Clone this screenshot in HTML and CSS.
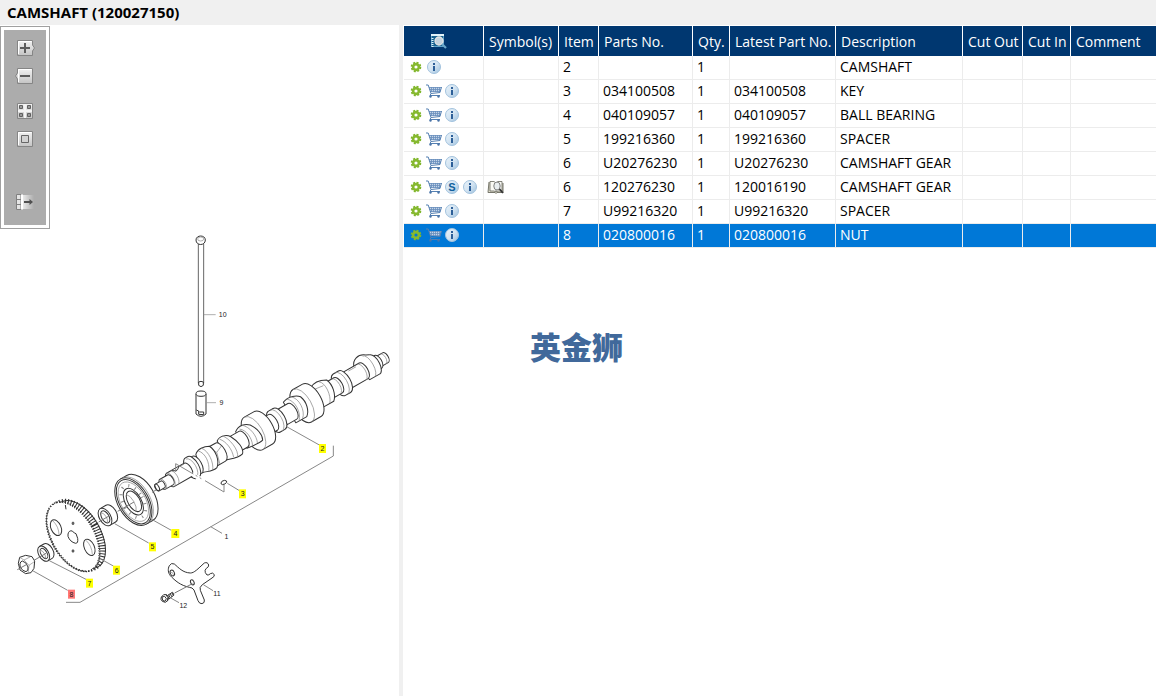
FILE: index.html
```html
<!DOCTYPE html>
<html lang="en">
<head>
  <meta charset="UTF-8" />
  <title>Parts Catalog</title>
  <link rel="stylesheet" href="styles.css">
</head>
<body>
  <!-- shared icons -->
  <svg class="sprite" aria-hidden="true">
    <defs>
      <linearGradient id="ball" x1="0" y1="0" x2="1" y2="1">
        <stop offset="0" stop-color="#eaf3fa" />
        <stop offset=".5" stop-color="#d3e4f2" />
        <stop offset="1" stop-color="#9dc0dd" />
      </linearGradient>
      <linearGradient id="key" x1="0" y1="0" x2="0" y2="1">
        <stop offset="0" stop-color="#f2f2f2" />
        <stop offset="1" stop-color="#c4c4c4" />
      </linearGradient>
      <linearGradient id="fade">
        <stop offset="0" stop-color="#eeeeee" />
        <stop offset="1" stop-color="#acacac" />
      </linearGradient>
      <symbol id="gear" viewBox="0 0 18 16">
        <circle cx="9" cy="8" r="4.4" fill="none" stroke="#7fb52c" stroke-width="1.8" stroke-dasharray="2 1.456" />
        <circle cx="9" cy="8" r="2.9" fill="none" stroke="#86b92f" stroke-width="2.6" />
      </symbol>
      <symbol id="cart" viewBox="0 0 18 16">
        <path d="M4 4H16L14.500 9H5.500Z" fill="#c3d4e8" />
        <path d="M4 4.500H16.500M4.500 6.500H15.500M5 8.500H15M6.500 4V9M8.500 4V9M10.500 4V9M12.500 4V9M14.500 4V9" stroke="#6a8fbd" stroke-width=".8" fill="none" />
        <path d="M1 2H3.200L6 10.500L5 12.500H15M16.500 4L15 9.500L6 10.500" stroke="#5580b2" fill="none" />
        <circle cx="5.500" cy="13.500" r="1.200" fill="#4a74a8" />
        <circle cx="13.500" cy="13.500" r="1.200" fill="#4a74a8" />
      </symbol>
      <symbol id="info" viewBox="0 0 18 16">
        <circle cx="9" cy="8" r="6.500" fill="url(#ball)" stroke="#a3c3de" />
        <path d="M8 4H10V6H8ZM8 7H10V12H8Z" fill="#2d5f98" />
      </symbol>
      <symbol id="super" viewBox="0 0 18 16">
        <circle cx="9" cy="8" r="6.500" fill="url(#ball)" stroke="#a3c3de" />
        <text x="9" y="12" class="ball-letter">S</text>
      </symbol>
      <symbol id="book" viewBox="0 0 18 16">
        <path d="M2 3L1 13.500H8L9 14.500L10 13.500H16V4" fill="#dedccb" stroke="#77776c" />
        <path d="M3 2.500H7L9 4V13L7 12H3ZM9 4L11 2.500H15V12H11L9 13" fill="#fafaf5" stroke="#66665c" stroke-width=".8" />
        <ellipse cx="10" cy="7" rx="3.200" ry="4" fill="#e9eef0" stroke="#808080" />
        <path d="M12.500 10L16 14" stroke="#333" stroke-width="1.800" />
      </symbol>
      <symbol id="search" viewBox="0 0 18 16">
        <path d="M1.500 1.500H13.500V13.500H1.500Z" fill="#17618f" stroke="#5fa3c8" />
        <path d="M1 2H14" stroke="#e2f3fa" stroke-width="2" />
        <path d="M2.500 5V14" stroke="#e2f3fa" stroke-width="2" stroke-dasharray="1 1" />
        <circle cx="9" cy="8" r="4" fill="#c4d4df" stroke="#e5e5e5" stroke-width="1.300" />
        <path d="M12 11L16 15" stroke="#6aa7cb" stroke-width="2.200" />
      </symbol>
    </defs>
  </svg>

  <header class="title-bar">
    <h1>CAMSHAFT (120027150)</h1>
  </header>

  <main class="split">
    <section class="drawing-pane">
      <svg class="drawing" viewBox="0 0 1197 2013" preserveAspectRatio="xMinYMin meet" role="img" aria-label="Camshaft parts drawing">

        <!-- assembly bracket line -->
        <path class="leader" d="M1000 1262V1293L240 1732H198" />

        <!-- push rod 10 and tappet 9 -->
        <g class="part" transform="translate(510 615)">
          <path class="rod" d="M85 42V460M101 42V460" />
          <path d="M86 456V466Q93 474 100 466V456Q93 452 86 456" />
          <path d="M78 30C78 14 106 14 106 30C106 48 78 48 78 30Z" />
          <ellipse class="thin" cx="92" cy="27" rx="9" ry="6" />
          <path d="M78 492V552Q93 566 108 552V492" />
          <ellipse cx="93" cy="491" rx="15" ry="8" />
          <path d="M79 540L86 543V553L101 554V546H88" />
          <path class="thin" d="M101 254H137M110 518H138" />
        </g>

        <!-- camshaft 2, laid out along its own axis from the drive end -->
        <g class="part" transform="translate(470 1388) rotate(-29.600)">
          <path d="M765 -17H789A9 17 0 0 1 789 17H765A9 17 0 0 1 765 -17" />
          <path class="thin" d="M781 -17A9 17 0 0 1 781 17" />
          <path d="M742 -22H764A11 22 0 0 1 764 22H742" />
          <path d="M694 -24C700 -42 722 -52 742 -36L752 -31A15 31 0 0 1 748 34H716Z" />
          <path class="thin" d="M732 -38A15 36 0 0 1 732 34" />
          <g transform="translate(9 2)">
            <path d="M640 -27H704A13 27 0 0 1 704 27H640Z" />
            <path class="thin" d="M696 -27A13 27 0 0 1 696 27M664 -22H690" />
            <path d="M620 -37H638A18 37 0 0 1 638 37H620A18 37 0 0 1 620 -37" />
            <path class="thin" d="M627 -37A18 37 0 0 1 627 37" />
            <path d="M565 -26H616A13 26 0 0 1 616 26H565Z" />
            <path class="thin" d="M608 -26A13 26 0 0 1 608 26" />
            <path d="M540 -34C560 -47 580 -39 594 -31C604 -10 596 22 581 35H545Z" />
            <path class="thin" d="M571 -38C588 -26 583 17 568 34M546 -25L577 -21" />
            <path d="M492 -56H525A28 56 0 0 1 525 56H492A28 56 0 0 1 492 -56" />
            <path class="thin" d="M492 -56A28 56 0 0 1 492 56" />
            <path d="M448 -37C470 -47 494 -36 501 -26C510 -4 503 23 488 35H450Z" />
            <path class="thin" d="M476 -40C496 -24 493 18 474 34M462 -40C482 -24 479 18 462 34" />
            <path d="M425 -27H458A13 27 0 0 1 458 27H425Z" />
            <path d="M396 -36H412A18 36 0 0 1 412 36H396A18 36 0 0 1 396 -36" />
            <path class="thin" d="M402 -36A18 36 0 0 1 402 36" />
            <path d="M360 -27H391A13 27 0 0 1 391 27H360Z" />
            <path d="M324 -56H358A28 56 0 0 1 358 56H324A28 56 0 0 1 324 -56" />
            <path class="thin" d="M324 -56A28 56 0 0 1 324 56" />
            <path d="M280 -31C298 -45 317 -38 328 -27C341 -8 346 17 338 31C325 35 302 31 285 29Z" />
            <path class="thin" d="M306 -39C325 -22 329 12 320 31M294 -32C311 -20 313 11 304 29" />
            <path d="M245 -27H289A13 27 0 0 1 289 27H245Z" />
            <path d="M218 -34C233 -46 253 -36 260 -25C271 -5 278 24 265 37C247 43 224 31 212 28Z" />
            <path class="thin" d="M239 -40C254 -24 262 23 247 38M227 -35C241 -20 245 10 237 32" />
            <path d="M176 -31H210A15 31 0 0 1 210 31H176Z" />
            <path class="thin" d="M185 -31L200 -5L191 30M200 -5L222 -15" />
            <path d="M142 -30C154 -44 177 -39 190 -32C201 -11 195 21 178 35C159 40 143 27 132 27Z" />
            <path class="thin" d="M166 -39C182 -21 177 19 163 35M154 -36C170 -20 166 13 152 31" />
          </g>
          <path d="M115 -29H139A14 29 0 0 1 139 29H115Z" />
          <path d="M119 -35H126A17 35 0 0 1 126 35H119A17 35 0 0 1 119 -35" />
          <path class="thin" d="M119 -31A15 31 0 0 1 119 31" />
          <path d="M47 -23H108A11 23 0 0 1 108 23H47A11 23 0 0 1 47 -23" />
          <path class="thin" d="M47 -23A11 23 0 0 1 47 23M60 -23A11 23 0 0 1 60 23M84 -21H106" />
          <path d="M66 -22Q78 -9 88 -22" />
          <path d="M21 -17H47A9 17 0 0 1 47 17H21A9 17 0 0 1 21 -17" />
          <path class="thin" d="M21 -17A9 17 0 0 1 21 17" />
          <path d="M2 -11H22A6 12 0 0 1 22 12H2A6 11 0 0 1 2 -11" />
          <ellipse cx="2" cy="0" rx="5" ry="11" />
        </g>

        <!-- key 3 -->
        <g transform="translate(450 945)">
          <path class="halo" d="M126 402L150 416" />
          <path class="key-line" d="M77 396V371L130 402M137 406L142 409M149 413L154 416M165 422L222 456V433" />
          <path class="part" d="M213 429Q214 422 224 421Q232 422 230 427Q226 433 217 434Q213 433 213 429Z" />
          <path class="leader" d="M232 430L270 453M410 260L508 315" />
        </g>

        <g transform="translate(0 1305)">
          <!-- bearing 4 -->
          <g class="part" transform="translate(400 125) rotate(-30)">
            <path d="M0 -78H22A45 78 0 0 1 22 78H0" />
            <ellipse rx="46" ry="78" />
            <path class="thin" d="M6 -78A45 78 0 0 1 6 78" />
            <ellipse rx="41" ry="73" />
            <ellipse class="thin" rx="37" ry="65" />
            <ellipse class="balls" rx="30" ry="53" />
            <ellipse rx="24" ry="44" />
            <ellipse cx="2" rx="18" ry="34" />
            <path class="thin" d="M-8 -30A18 34 0 0 1 -8 30" />
          </g>
          <!-- spacer 5 -->
          <g class="part" transform="translate(315 171) rotate(-30)">
            <path d="M0 -29H20A17 29 0 0 1 20 29H0" />
            <ellipse rx="17" ry="29" />
            <ellipse cx="1" rx="11" ry="20" />
            <path class="thin" d="M-4 -17A10 19 0 0 1 -2 18" />
          </g>
          <!-- camshaft gear 6 -->
          <g class="part" transform="translate(219 230) rotate(-30)">
            <ellipse cx="20" cy="4" rx="63" ry="112" />
            <ellipse class="teeth" cx="11" cy="2" rx="62" ry="107" />
            <ellipse class="face" rx="60" ry="112" />
            <ellipse class="face-teeth" rx="65" ry="115" />
            <path class="face-edge" d="M-20 -108A62 113 0 0 0 -20 108" />
          </g>
          <g class="part" transform="translate(219 230)">
            <ellipse cx="-51" cy="-27" rx="15" ry="25" transform="rotate(-24 -51 -27)" />
            <path class="thin" d="M-61 -48Q-42 -30 -42 -5" />
            <ellipse cx="49" cy="32" rx="15" ry="26" transform="rotate(-24 49 32)" />
            <path class="thin" d="M39 11Q57 28 58 54" />
            <path d="M-15 -8Q-12 -20 -2 -17L4 -11L9 -9L14 5Q16 20 8 20Q-9 16 -15 -1Z" />
            <ellipse class="dot" cx="0" cy="-40" rx="3" ry="4" />
            <ellipse class="dot" cx="0" cy="43" rx="3" ry="4" />
            <path d="M-23 -95L-21 -82" />
          </g>
          <!-- spacer 7 -->
          <g class="part" transform="translate(131 281) rotate(-30)">
            <path d="M0 -25H15A15 25 0 0 1 15 25H0" />
            <ellipse rx="15" ry="25" />
            <ellipse cx="1" rx="9" ry="17" />
            <path class="thin" d="M-3 -14A9 17 0 0 1 -2 15" />
          </g>
          <!-- nut 8 -->
          <g class="part">
            <path d="M55 310L59 292L77 286L96 290L104 303L102 325L93 338L77 341L60 330Z" />
            <path class="thin" d="M59 292L72 300L90 291M72 300L87 316L103 305M87 316L84 340" />
            <path d="M61 322Q57 306 67 303Q80 306 84 321Q86 333 78 335Q67 333 61 322Z" />
          </g>
          <path class="center-line" d="M52 329L79 314M102 301L138 280M296 186L327 168M353 154L402 126M456 97L468 90" />
          <path class="leader" d="M98 332L203 391M148 302L258 358M304 298L340 318M344 191L446 249M455 178L514 211" />
        </g>

        <!-- bracket 11 and bolt 12 -->
        <g transform="translate(420 1215)">
          <g class="part">
            <path d="M88 407Q94 397 103 402C116 413 128 428 151 429C163 429 173 417 193 399Q203 395 206 405Q207 411 199 415Q193 420 196 428L201 435Q207 436 211 431Q218 426 223 434Q224 440 216 444L187 464Q177 472 181 481L193 510Q195 519 186 521Q178 522 174 512L162 480Q157 472 148 472C121 466 105 452 91 437C84 428 83 417 88 407Z" />
            <ellipse cx="97" cy="429" rx="6" ry="9" transform="rotate(-25 97 429)" />
            <path class="thin" d="M92 427Q98 425 100 434" />
            <ellipse cx="157" cy="457" rx="5" ry="8" transform="rotate(-25 157 457)" />
            <path d="M82 497L97 487Q103 489 101 496L87 507Z" />
            <path d="M86 494L90 503M91 491L95 500M96 488L100 497" />
            <path d="M64 501L71 494L80 494Q89 501 84 511L76 517L67 514Q60 508 64 501Z" />
            <path d="M66 501L74 499L79 506L75 514L68 511ZM78 494Q87 502 82 513" />
          </g>
          <path class="center-line" d="M104 489L163 458" />
          <path class="leader" d="M190 464L219 482M92 504L117 518M212 290L246 310" />
        </g>

        <!-- callouts -->
        <g class="callout">
          <rect x="957" y="1257" width="21" height="27" /><text x="967" y="1278">2</text>
          <rect x="717" y="1393" width="21" height="27" /><text x="728" y="1414">3</text>
          <rect x="514" y="1512" width="24" height="27" /><text x="526" y="1533">4</text>
          <rect x="447" y="1552" width="21" height="27" /><text x="457" y="1573">5</text>
          <rect x="339" y="1622" width="21" height="27" /><text x="350" y="1643">6</text>
          <rect x="258" y="1661" width="21" height="27" /><text x="268" y="1682">7</text>
          <rect class="active" x="204" y="1694" width="21" height="27" /><text x="214" y="1715">8</text>
          <text x="668" y="876">10</text>
          <text x="664" y="1140">9</text>
          <text x="679" y="1543">1</text>
          <text x="651" y="1712">11</text>
          <text x="550" y="1749">12</text>
        </g>
      </svg>

      <div class="palette">
        <div class="palette-inner">
          <button type="button" aria-label="Zoom in">
            <svg viewBox="0 0 20 16"><path d="M2.500 .5H17.500V5L19.500 8L17.500 11V15.500H2.500Z" fill="url(#key)" stroke="#858585" /><path d="M3.500 14V1.500H16.500" fill="none" stroke="#fff" /><path d="M5 8H15M10 3V13" stroke="#5c5c5c" stroke-width="2" /></svg>
          </button>
          <button type="button" aria-label="Zoom out">
            <svg viewBox="0 0 20 16"><path d="M17.500 .5H2.500V5L.5 8L2.500 11V15.500H17.500Z" fill="url(#key)" stroke="#858585" /><path d="M3.500 14V1.500H16.500" fill="none" stroke="#fff" /><path d="M5 8H15" stroke="#5c5c5c" stroke-width="2" /></svg>
          </button>
          <button type="button" class="group-start" aria-label="Fit page">
            <svg viewBox="0 0 20 16"><path d="M2.500 .5H17.500V15.500H2.500Z" fill="url(#key)" stroke="#858585" /><path d="M10 1V15M3 8H17" stroke="#f4f4f4" stroke-width="2" /><path d="M4.500 2.500H7.500V5.500H4.500ZM12.500 2.500H15.500V5.500H12.500ZM4.500 10.500H7.500V13.500H4.500ZM12.500 10.500H15.500V13.500H12.500Z" fill="#999" stroke="#606060" /></svg>
          </button>
          <button type="button" aria-label="Actual size">
            <svg viewBox="0 0 20 16"><path d="M2.500 .5H17.500V15.500H2.500Z" fill="url(#key)" stroke="#858585" /><path d="M3.500 14V1.500H16.500" fill="none" stroke="#fff" /><path d="M6.500 4.500H13.500V11.500H6.500Z" fill="#d2d2d2" stroke="#666" /></svg>
          </button>
          <button type="button" class="group-last" aria-label="Hide list">
            <svg viewBox="0 0 20 16"><path d="M7 1H19V15H7Z" fill="url(#fade)" /><path d="M1.500 .5H6V15.500H1.500Z" fill="#e4e4e4" stroke="#808080" /><path d="M1 5.500H6M1 10.500H6" stroke="#808080" /><path d="M7 .5V15.500" stroke="#fff" stroke-width="2" /><path d="M9 8H16" stroke="#505050" stroke-width="2" /><path d="M14.500 5L18 8L14.500 11Z" fill="#505050" /></svg>
          </button>
        </div>
      </div>
    </section>

    <div class="splitter"></div>

    <section class="list-pane">
      <table class="parts">
        <colgroup>
          <col class="col-actions"><col class="col-symbols"><col class="col-item"><col class="col-part"><col class="col-qty"><col class="col-latest"><col class="col-desc"><col class="col-out"><col class="col-in"><col>
        </colgroup>
        <thead>
          <tr>
            <th class="tools"><button type="button" aria-label="Search parts"><svg><use href="#search" /></svg></button></th>
            <th>Symbol(s)</th>
            <th>Item</th>
            <th>Parts No.</th>
            <th>Qty.</th>
            <th>Latest Part No.</th>
            <th>Description</th>
            <th>Cut Out</th>
            <th>Cut In</th>
            <th>Comment</th>
          </tr>
        </thead>
        <tbody>
          <tr>
            <td class="actions"><div><button type="button" aria-label="Options"><svg><use href="#gear" /></svg></button><button type="button" aria-label="Info"><svg><use href="#info" /></svg></button></div></td>
            <td></td><td>2</td><td></td><td>1</td><td></td><td>CAMSHAFT</td><td></td><td></td><td></td>
          </tr>
          <tr>
            <td class="actions"><div><button type="button" aria-label="Options"><svg><use href="#gear" /></svg></button><button type="button" aria-label="Add to cart"><svg><use href="#cart" /></svg></button><button type="button" aria-label="Info"><svg><use href="#info" /></svg></button></div></td>
            <td></td><td>3</td><td>034100508</td><td>1</td><td>034100508</td><td>KEY</td><td></td><td></td><td></td>
          </tr>
          <tr>
            <td class="actions"><div><button type="button" aria-label="Options"><svg><use href="#gear" /></svg></button><button type="button" aria-label="Add to cart"><svg><use href="#cart" /></svg></button><button type="button" aria-label="Info"><svg><use href="#info" /></svg></button></div></td>
            <td></td><td>4</td><td>040109057</td><td>1</td><td>040109057</td><td>BALL BEARING</td><td></td><td></td><td></td>
          </tr>
          <tr>
            <td class="actions"><div><button type="button" aria-label="Options"><svg><use href="#gear" /></svg></button><button type="button" aria-label="Add to cart"><svg><use href="#cart" /></svg></button><button type="button" aria-label="Info"><svg><use href="#info" /></svg></button></div></td>
            <td></td><td>5</td><td>199216360</td><td>1</td><td>199216360</td><td>SPACER</td><td></td><td></td><td></td>
          </tr>
          <tr>
            <td class="actions"><div><button type="button" aria-label="Options"><svg><use href="#gear" /></svg></button><button type="button" aria-label="Add to cart"><svg><use href="#cart" /></svg></button><button type="button" aria-label="Info"><svg><use href="#info" /></svg></button></div></td>
            <td></td><td>6</td><td>U20276230</td><td>1</td><td>U20276230</td><td>CAMSHAFT GEAR</td><td></td><td></td><td></td>
          </tr>
          <tr>
            <td class="actions"><div><button type="button" aria-label="Options"><svg><use href="#gear" /></svg></button><button type="button" aria-label="Add to cart"><svg><use href="#cart" /></svg></button><button type="button" aria-label="Supersession"><svg><use href="#super" /></svg></button><button type="button" aria-label="Info"><svg><use href="#info" /></svg></button></div></td>
            <td class="actions"><div><button type="button" aria-label="Open reference"><svg><use href="#book" /></svg></button></div></td><td>6</td><td>120276230</td><td>1</td><td>120016190</td><td>CAMSHAFT GEAR</td><td></td><td></td><td></td>
          </tr>
          <tr>
            <td class="actions"><div><button type="button" aria-label="Options"><svg><use href="#gear" /></svg></button><button type="button" aria-label="Add to cart"><svg><use href="#cart" /></svg></button><button type="button" aria-label="Info"><svg><use href="#info" /></svg></button></div></td>
            <td></td><td>7</td><td>U99216320</td><td>1</td><td>U99216320</td><td>SPACER</td><td></td><td></td><td></td>
          </tr>
          <tr class="selected">
            <td class="actions"><div><button type="button" aria-label="Options"><svg><use href="#gear" /></svg></button><button type="button" aria-label="Add to cart"><svg><use href="#cart" /></svg></button><button type="button" aria-label="Info"><svg><use href="#info" /></svg></button></div></td>
            <td></td><td>8</td><td>020800016</td><td>1</td><td>020800016</td><td>NUT</td><td></td><td></td><td></td>
          </tr>
        </tbody>
      </table>
      <div class="watermark" lang="zh">英金狮</div>
    </section>
  </main>
</body>
</html>
```
FILE: styles.css
```css
* {
  box-sizing: border-box;
}
body {
  margin: 0;
  min-height: 100vh;
  display: flex;
  flex-direction: column;
  font-family: "Open Sans", "Noto Sans", sans-serif;
  font-size: 14px;
  color: #000;
  background: #fff;
}
.sprite {
  position: absolute;
  width: 0;
  height: 0;
}
button {
  display: block;
  padding: 0;
  border: none;
  background: none;
  cursor: pointer;
}
button svg {
  display: block;
  width: 18px;
  height: 16px;
}
.ball-letter {
  font-size: 11px;
  font-weight: bold;
  text-anchor: middle;
  fill: #0f5f9c;
}
.title-bar {
  padding: 0 7px;
  background: #f0f0f0;
}
.title-bar h1 {
  margin: 0;
  font-size: 15px;
  line-height: 25px;
}
.split {
  flex: 1;
  display: grid;
  grid-template-columns: 399fr 4px 753fr;
}
.splitter {
  background: #f0f0f0;
  cursor: col-resize;
}

/* drawing */
.drawing-pane {
  position: relative;
  min-width: 0;
}
.drawing {
  display: block;
  width: 100%;
}
.part {
  fill: #fff;
  stroke: #333;
  stroke-width: 3;
  stroke-linejoin: round;
}
.thin {
  fill: none;
  stroke: #888;
  stroke-width: 2;
}
.rod {
  stroke: #666;
}
.leader {
  fill: none;
  stroke: #888;
  stroke-width: 3;
}
.halo {
  stroke: #fff;
  stroke-width: 12;
}
.key-line {
  fill: none;
  stroke: #888;
  stroke-width: 3;
}
.center-line {
  fill: none;
  stroke: #777;
  stroke-width: 3;
  stroke-dasharray: 60 6 8 6;
}
.balls {
  stroke-width: 9;
  stroke: #888;
  stroke-dasharray: 3 18;
}
.teeth {
  fill: none;
  stroke-width: 24;
  stroke-dasharray: 3 5;
}
.face {
  stroke: none;
}
.face-teeth {
  fill: none;
  stroke-width: 4;
  stroke-dasharray: 4 4;
}
.face-edge {
  fill: none;
  stroke-width: 2;
}
.dot {
  fill: #777;
  stroke-width: 2;
}
.callout {
  font-family: "Liberation Sans", Arial, sans-serif;
  font-size: 21px;
  text-anchor: middle;
  fill: #222;
}
.callout rect {
  fill: #ff0;
}
.callout .active {
  fill: #f77;
}

/* floating zoom palette */
.palette {
  position: absolute;
  top: 1px;
  left: 0;
  padding: 3px;
  border: 1px solid #a0a0a0;
  background: #fff;
}
.palette-inner {
  display: flex;
  flex-direction: column;
  gap: 12px;
  padding: 10px 11px 15px;
  background: #acacac;
}
.palette svg {
  width: 20px;
}
.group-start {
  margin-top: 7px;
}
.group-last {
  margin-top: 35px;
}

/* parts list */
.list-pane {
  position: relative;
  min-width: 0;
  padding: 1px 0 0 1px;
}
.parts {
  width: 100%;
  table-layout: fixed;
  border-collapse: separate;
  border-spacing: 0;
}
.parts th,
.parts td {
  text-align: left;
  white-space: nowrap;
  border-right: 1px solid #ececec;
}
.parts th {
  height: 30px;
  padding: 0 0 0 5px;
  font-weight: normal;
  color: #fff;
  background: #003770;
  border-right-color: #fff;
}
.parts td {
  height: 24px;
  padding: 0 0 2px 4px;
  line-height: 20px;
  border-bottom: 1px solid #ececec;
}
.parts th:last-child,
.parts td:last-child {
  border-right: none;
}
.parts th.tools {
  padding: 0 0 0 26px;
}
.parts td.actions {
  padding: 0 0 2px 3px;
}
.actions div {
  display: flex;
}
.selected td {
  color: #fff;
  background: #0078d7;
}
.col-actions { width: 80px; }
.col-symbols { width: 75px; }
.col-item { width: 40px; }
.col-part { width: 94px; }
.col-qty { width: 37px; }
.col-latest { width: 106px; }
.col-desc { width: 127px; }
.col-out { width: 60px; }
.col-in { width: 48px; }

.watermark {
  position: absolute;
  top: 300px;
  left: 127px;
  font-family: "Noto Sans CJK SC", sans-serif;
  font-size: 31px;
  font-weight: 900;
  line-height: 42px;
  color: #41699b;
  pointer-events: none;
}
```
